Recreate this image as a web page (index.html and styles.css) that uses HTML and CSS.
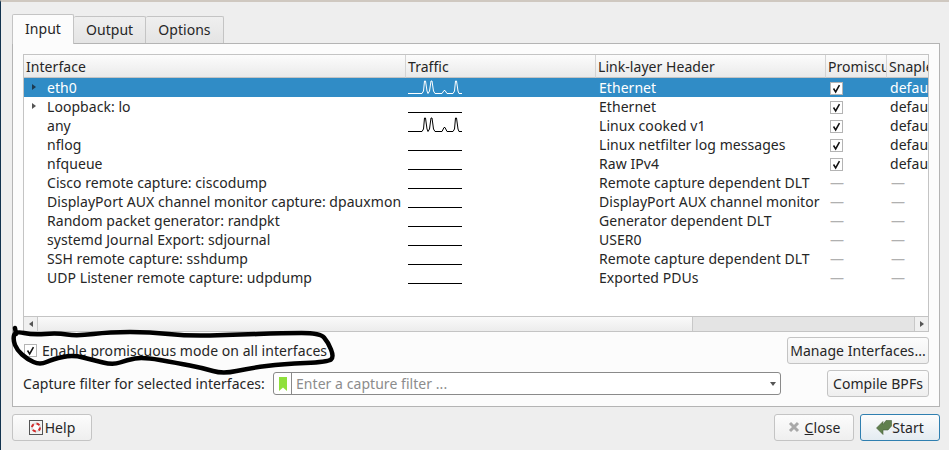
FILE: index.html
```html
<!DOCTYPE html>
<html lang="en">
<head>
    <meta charset="UTF-8">
    <title>Capture Options</title>
    <link rel="stylesheet" href="styles.css">
</head>
<body>
    <div class="window">
        <!-- Tabs -->
        <div class="tabs">
            <div class="tab active">Input</div>
            <div class="tab">Output</div>
            <div class="tab">Options</div>
        </div>

        <div class="pane">
            <!-- Interface list -->
            <div class="list">
                <table>
                    <colgroup>
                        <col class="col-name">
                        <col class="col-traffic">
                        <col class="col-link">
                        <col class="col-promisc">
                        <col class="col-snap">
                    </colgroup>
                    <thead>
                        <tr>
                            <th>Interface</th>
                            <th>Traffic</th>
                            <th>Link-layer Header</th>
                            <th>Promiscuous</th>
                            <th>Snaplen (B)</th>
                        </tr>
                    </thead>
                    <tbody>
                        <tr class="selected">
                            <td class="name"><span class="arrow"></span>eth0</td>
                            <td class="traffic"><svg class="spark" viewBox="0 0 54 16"><polyline points="0,15.5 14,15.5 15.5,13 16.5,3 17.5,3 19,13 20,15.5 21.5,13 23,3 24,3 25.5,13 27,15.5 34,15.5 36,12.5 37,12.5 39,15.5 45,15.5 46.5,13 47.5,3 48.5,3 50,13 51,15.5 54,15.5"/></svg></td>
                            <td>Ethernet</td>
                            <td><span class="check"><svg viewBox="0 0 13 13"><path d="M3 6.5 L5.5 10.5 L10 2.5"/></svg></span></td>
                            <td>default</td>
                        </tr>
                        <tr>
                            <td class="name"><span class="arrow"></span>Loopback: lo</td>
                            <td class="traffic"><svg class="spark" viewBox="0 0 54 16"><polyline points="0,15.5 54,15.5"/></svg></td>
                            <td>Ethernet</td>
                            <td><span class="check"><svg viewBox="0 0 13 13"><path d="M3 6.5 L5.5 10.5 L10 2.5"/></svg></span></td>
                            <td>default</td>
                        </tr>
                        <tr>
                            <td class="name">any</td>
                            <td class="traffic"><svg class="spark" viewBox="0 0 54 16"><polyline points="0,15.5 14,15.5 15.5,13 16.5,2 17.5,2 19,13 20,15.5 21.5,13 23,2 24,2 25.5,13 27,15.5 34,15.5 36,11.5 37,11.5 39,15.5 45,15.5 46.5,13 47.5,2 48.5,2 50,13 51,15.5 54,15.5"/></svg></td>
                            <td>Linux cooked v1</td>
                            <td><span class="check"><svg viewBox="0 0 13 13"><path d="M3 6.5 L5.5 10.5 L10 2.5"/></svg></span></td>
                            <td>default</td>
                        </tr>
                        <tr>
                            <td class="name">nflog</td>
                            <td class="traffic"><svg class="spark" viewBox="0 0 54 16"><polyline points="0,15.5 54,15.5"/></svg></td>
                            <td>Linux netfilter log messages</td>
                            <td><span class="check"><svg viewBox="0 0 13 13"><path d="M3 6.5 L5.5 10.5 L10 2.5"/></svg></span></td>
                            <td>default</td>
                        </tr>
                        <tr>
                            <td class="name">nfqueue</td>
                            <td class="traffic"><svg class="spark" viewBox="0 0 54 16"><polyline points="0,15.5 54,15.5"/></svg></td>
                            <td>Raw IPv4</td>
                            <td><span class="check"><svg viewBox="0 0 13 13"><path d="M3 6.5 L5.5 10.5 L10 2.5"/></svg></span></td>
                            <td>default</td>
                        </tr>
                        <tr>
                            <td class="name">Cisco remote capture: ciscodump</td>
                            <td class="traffic"><svg class="spark" viewBox="0 0 54 16"><polyline points="0,15.5 54,15.5"/></svg></td>
                            <td>Remote capture dependent DLT</td>
                            <td class="dash">—</td>
                            <td class="dash">—</td>
                        </tr>
                        <tr>
                            <td class="name">DisplayPort AUX channel monitor capture: dpauxmon</td>
                            <td class="traffic"><svg class="spark" viewBox="0 0 54 16"><polyline points="0,15.5 54,15.5"/></svg></td>
                            <td>DisplayPort AUX channel monitor</td>
                            <td class="dash">—</td>
                            <td class="dash">—</td>
                        </tr>
                        <tr>
                            <td class="name">Random packet generator: randpkt</td>
                            <td class="traffic"><svg class="spark" viewBox="0 0 54 16"><polyline points="0,15.5 54,15.5"/></svg></td>
                            <td>Generator dependent DLT</td>
                            <td class="dash">—</td>
                            <td class="dash">—</td>
                        </tr>
                        <tr>
                            <td class="name">systemd Journal Export: sdjournal</td>
                            <td class="traffic"><svg class="spark" viewBox="0 0 54 16"><polyline points="0,15.5 54,15.5"/></svg></td>
                            <td>USER0</td>
                            <td class="dash">—</td>
                            <td class="dash">—</td>
                        </tr>
                        <tr>
                            <td class="name">SSH remote capture: sshdump</td>
                            <td class="traffic"><svg class="spark" viewBox="0 0 54 16"><polyline points="0,15.5 54,15.5"/></svg></td>
                            <td>Remote capture dependent DLT</td>
                            <td class="dash">—</td>
                            <td class="dash">—</td>
                        </tr>
                        <tr>
                            <td class="name">UDP Listener remote capture: udpdump</td>
                            <td class="traffic"><svg class="spark" viewBox="0 0 54 16"><polyline points="0,15.5 54,15.5"/></svg></td>
                            <td>Exported PDUs</td>
                            <td class="dash">—</td>
                            <td class="dash">—</td>
                        </tr>
                    </tbody>
                </table>

                <div class="scrollbar">
                    <div class="scroll-btn"><span class="tri-left"></span></div>
                    <div class="scroll-handle"></div>
                    <div class="scroll-trough"></div>
                    <div class="scroll-btn right"><span class="tri-right"></span></div>
                </div>
            </div>

            <div class="row promisc-row">
                <label class="all-check">
                    <span class="check"><svg viewBox="0 0 13 13"><path d="M3 6.5 L5.5 10.5 L10 2.5"/></svg></span>
                    Enable promiscuous mode on all interfaces
                </label>
                <button class="btn manage">Manage Interfaces...</button>
            </div>

            <div class="row filter-row">
                <span class="filter-label">Capture filter for selected interfaces:</span>
                <div class="filter">
                    <span class="bookmark"><svg viewBox="0 0 8 14"><path d="M0 0 H8 V14 L4 10.5 L0 14 Z"/></svg></span>
                    <span class="placeholder">Enter a capture filter ...</span>
                    <span class="combo-arrow"></span>
                </div>
                <button class="btn compile">Compile BPFs</button>
            </div>
        </div>

        <!-- Bottom buttons -->
        <div class="footer">
            <button class="btn foot-btn help">
                <svg class="help-icon" viewBox="0 0 14 15">
                    <rect x="0.5" y="0.5" width="13" height="14" fill="#f4f4f4" stroke="#555"/>
                    <circle cx="7" cy="7.5" r="4" fill="#fff" stroke="#d8dcdc" stroke-width="2"/>
                    <circle cx="7" cy="7.5" r="4" fill="none" stroke="#d42a2a" stroke-width="2" stroke-dasharray="3.3 3"/>
                </svg>Help
            </button>
            <div class="footer-right">
                <button class="btn foot-btn close">
                    <svg class="close-icon" viewBox="0 0 12 12"><path d="M2 2 L10 10 M10 2 L2 10"/></svg><u>C</u>lose
                </button>
                <button class="btn foot-btn start">
                    <svg class="start-icon" viewBox="0 0 16 15"><path d="M0.5 8 L7 1.5 V4.5 L10 0.5 H15.5 V6 L12 10 H7 V14.5 Z"/></svg>Start
                </button>
            </div>
        </div>
    </div>

    <!-- marker drawn over the screenshot -->
    <svg class="scribble" viewBox="0 0 949 450">
        <path d="M15 328 L16 334 M14 335.5 Q13 340 15 345 Q17 350 22 354.5 Q27 359 33.5 362 Q40 365 46.5 362 Q53 359 63 357 Q73 355 83 357.5 Q93 360 103 362.5 Q113 365 120 362.5 Q127 360 135 358.5 Q143 357 160 360 Q177 363 190 365.5 Q203 368 213 371 Q223 374 236.5 371 Q250 368 266.5 366 Q283 364 305.5 363 Q328 362 331 359.5 Q334 357 331 349.5 Q328 342 324 337.5 Q320 333 301.5 333 Q283 333 258 334 Q233 335 210 335.5 Q187 336 168.5 334 Q150 332 130 332 Q110 332 93.5 334 Q77 336 67 334.5 Q57 333 45 334 Q33 335 24 333 Q15 331 14 335.5"/>
    </svg>
</body>
</html>
```

FILE: styles.css
```css
* {
    box-sizing: border-box;
}

html, body {
    margin: 0;
    padding: 0;
    height: 450px;
    overflow: hidden;
}

body {
    position: relative;
    font-family: 'Noto Sans', sans-serif;
    font-size: 14px;
    letter-spacing: 0.05px;
    color: #262626;
    background: #eeeeee;
}

.window {
    width: 949px;
    height: 450px;
    padding: 14px 9px 0 11px;
    border-top: 2px solid #cfc8c0;
    border-left: 1px solid #12334f;
    background: #eeeeee;
}

/* tabs */
.tabs {
    display: flex;
    height: 29px;
    padding-left: 1px;
    position: relative;
    z-index: 1;
    margin-top: -2px;
}

.tab {
    height: 27px;
    margin-top: 2px;
    padding: 3px 12px 0 12px;
    border: 1px solid #c4c4c4;
    border-bottom: 0;
    border-left: 0;
    border-radius: 2px 2px 0 0;
    background: linear-gradient(#efefef, #e4e4e4);
}

.tab.active {
    height: 30px;
    margin-top: 0;
    padding: 4px 12px 0 12px;
    border-left: 1px solid #c4c4c4;
    background: #fcfcfc;
    margin-left: -1px;
}

/* main panel */
.pane {
    height: 364px;
    padding: 10px 10px 0 10px;
    border: 1px solid #b4b4b4;
    background: #fcfcfc;
}

.list {
    width: 906px;
    height: 278px;
    display: flex;
    flex-direction: column;
    justify-content: space-between;
    border: 1px solid #c4c4c4;
    background: #fff;
}

table {
    width: 904px;
    table-layout: fixed;
    border-collapse: separate;
    border-spacing: 0;
}

.col-name { width: 382px; }
.col-traffic { width: 190px; }
.col-link { width: 230px; }
.col-promisc { width: 61px; }
.col-snap { width: 41px; }

th {
    height: 23px;
    padding: 0 0 0 2px;
    font-weight: normal;
    text-align: left;
    white-space: nowrap;
    overflow: hidden;
    border-right: 1px solid #d4d4d4;
    border-bottom: 1px solid #c4c4c4;
    background: linear-gradient(#fcfcfc, #eaeaea);
}

th:last-child {
    border-right: 0;
}

td {
    height: 19px;
    padding: 0 0 0 3px;
    white-space: nowrap;
    overflow: hidden;
    line-height: 18px;
}

td.name {
    padding-left: 23px;
    position: relative;
}

td.traffic {
    vertical-align: top;
}

.selected td {
    background: #308cc6;
    color: #fff;
}

.arrow {
    position: absolute;
    left: 8px;
    top: 6px;
    border-left: 4px solid #555;
    border-top: 3.5px solid transparent;
    border-bottom: 3.5px solid transparent;
}

.selected .arrow {
    border-left-color: #1d3a50;
}

.spark {
    display: block;
    width: 54px;
    height: 16px;
    margin-left: -1px;
}

.spark polyline {
    fill: none;
    stroke: #000;
    stroke-width: 1;
}

.selected .spark polyline {
    stroke: #fff;
}

.check {
    display: inline-block;
    width: 13px;
    height: 13px;
    margin-left: 1px;
    border: 1px solid #b4b4b4;
    background: #fff;
    vertical-align: -2px;
}

.check svg {
    display: block;
    width: 11px;
    height: 11px;
}

.check path {
    fill: none;
    stroke: #111;
    stroke-width: 1.8;
}

td.dash {
    color: #b0b0b0;
    padding-left: 4px;
}

/* scrollbar under the list */
.scrollbar {
    display: flex;
    height: 15px;
    border-top: 1px solid #c4c4c4;
}

.scroll-btn {
    width: 14px;
    display: flex;
    align-items: center;
    justify-content: center;
    background: #f0f0f0;
    border-right: 1px solid #c8c8c8;
}

.scroll-btn.right {
    border-right: 0;
    border-left: 1px solid #c8c8c8;
}

.tri-left {
    border-right: 4px solid #555;
    border-top: 3.5px solid transparent;
    border-bottom: 3.5px solid transparent;
}

.tri-right {
    border-left: 4px solid #555;
    border-top: 3.5px solid transparent;
    border-bottom: 3.5px solid transparent;
}

.scroll-handle {
    width: 655px;
    background: linear-gradient(#fafafa, #ececec);
    border-right: 1px solid #c8c8c8;
}

.scroll-trough {
    flex: 1;
    background: #e4e4e4;
}

/* rows below the list */
.row {
    display: flex;
    align-items: center;
    width: 906px;
}

.promisc-row {
    justify-content: space-between;
    margin-top: 5px;
}

.all-check {
    display: flex;
    align-items: center;
    gap: 5px;
    margin-left: 1px;
    padding-bottom: 1px;
}

.all-check .check {
    margin-left: 0;
}

.btn {
    height: 27px;
    padding: 0 0 1px 0;
    font-family: inherit;
    font-size: 14px;
    letter-spacing: inherit;
    color: #262626;
    border: 1px solid #c4c4c4;
    border-radius: 3px;
    background: linear-gradient(#fcfcfc, #efefef);
}

.manage {
    width: 142px;
}

.filter-row {
    margin-top: 6px;
}

.filter-label {
    width: 250px;
}

.filter {
    width: 508px;
    height: 23px;
    display: flex;
    align-items: center;
    position: relative;
    border: 1px solid #8a8a8a;
    border-radius: 3px;
    background: #fff;
}

.bookmark {
    width: 18px;
    height: 21px;
    display: flex;
    align-items: center;
    justify-content: center;
    border-right: 1px solid #8a8a8a;
}

.bookmark svg {
    width: 8px;
    height: 14px;
    fill: #8fe03c;
}

.placeholder {
    margin-left: 4px;
    color: #8c8c8c;
}

.combo-arrow {
    position: absolute;
    right: 4px;
    top: 9px;
    border-top: 4px solid #555;
    border-left: 3.5px solid transparent;
    border-right: 3.5px solid transparent;
}

.compile {
    width: 102px;
    margin-left: auto;
}

/* footer */
.footer {
    display: flex;
    justify-content: space-between;
    margin-top: 7px;
}

.footer-right {
    display: flex;
    gap: 6px;
}

.foot-btn {
    width: 80px;
    display: flex;
    align-items: center;
    justify-content: center;
}

.help-icon {
    flex: none;
    width: 14px;
    height: 15px;
    margin-right: 2px;
}

.close-icon {
    width: 12px;
    height: 12px;
    margin-right: 5px;
}

.close-icon path {
    stroke: #a8a8a8;
    stroke-width: 3;
    fill: none;
}

.start {
    border-color: #2f7fb0;
    background: linear-gradient(#fcfcfc, #e3ebf1);
}

.start-icon {
    flex: none;
    width: 16px;
    height: 15px;
    fill: #60804e;
    stroke: #47603a;
    stroke-width: 0.6;
}

/* marker scribble */
.scribble {
    position: absolute;
    left: 0;
    top: 0;
    width: 949px;
    height: 450px;
    pointer-events: none;
}

.scribble path {
    fill: none;
    stroke: #000;
    stroke-width: 4.5;
    stroke-linejoin: round;
    stroke-linecap: round;
}
```
